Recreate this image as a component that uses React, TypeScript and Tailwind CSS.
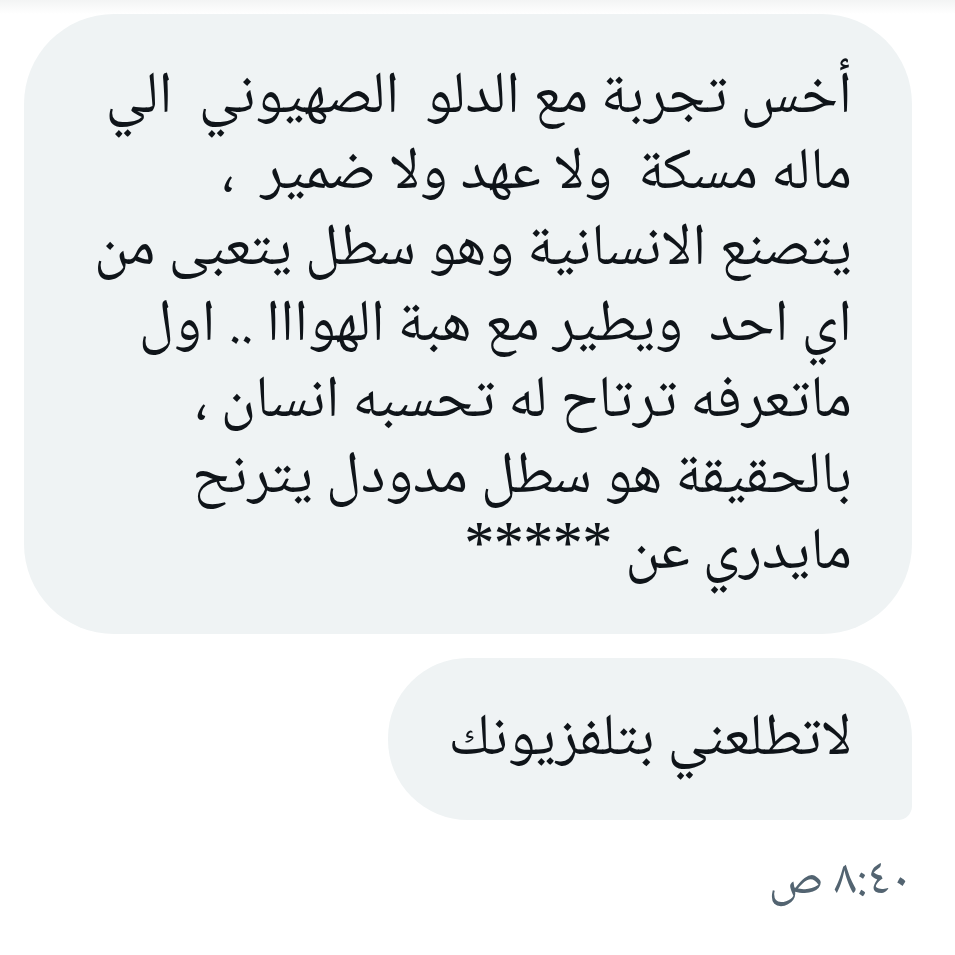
import React from "react";

const lines = [
  "أخس تجربة مع الدلو  الصهيوني  الي",
  "ماله مسكة  ولا عهد ولا ضمير  ،",
  "يتصنع الانسانية وهو سطل يتعبى من",
  "اي احد  ويطير مع هبة الهوااا .. اول",
  "ماتعرفه ترتاح له تحسبه انسان ،",
  "بالحقيقة هو سطل مدودل يترنح",
  "مايدري عن *****",
];

export default function App() {
  return (
    <div
      dir="rtl"
      className="w-[955px] h-[955px] bg-white relative overflow-hidden text-[#0f1419]"
      style={{ fontFamily: '"Noto Naskh Arabic", "Noto Sans Arabic", "DejaVu Sans", sans-serif' }}
    >
      <div className="absolute top-0 left-0 right-0 h-[14px] bg-gradient-to-b from-[#f3f4f4] to-white" />
      <div className="flex flex-col items-start pt-[14px] pr-[43px]">
        <div className="w-[888px] bg-[#eff3f4] rounded-[90px] px-[60px] pt-[47px] pb-[41px] text-[59px] leading-[76px]">
          {lines.map((l, i) => (
            <div key={i} className="whitespace-pre">{l}</div>
          ))}
        </div>
        <div className="mt-[24px] bg-[#eff3f4] rounded-tl-[80px] rounded-tr-[80px] rounded-bl-[80px] rounded-br-[14px] px-[60px] pt-[45px] pb-[41px] text-[59px] leading-[76px]">
          <div className="whitespace-pre">لاتطلعني بتلفزيونك</div>
        </div>
        <div className="mt-[33px] text-[50px] leading-[60px] text-[#536471]">٨:٤٠ ص</div>
      </div>
    </div>
  );
}
